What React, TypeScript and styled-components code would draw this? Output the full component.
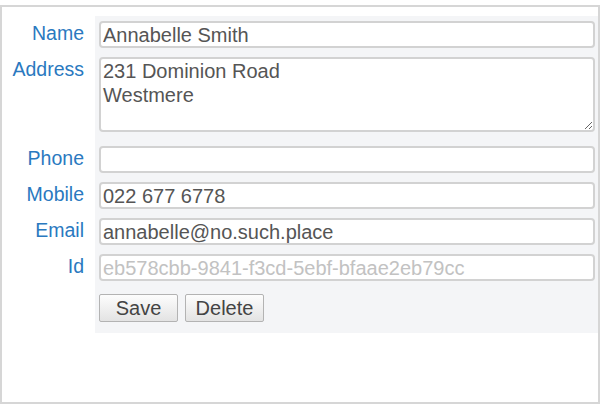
import styled, { createGlobalStyle } from "styled-components";

const GlobalStyle = createGlobalStyle`
  body {
    margin: 0;
    background: #fff;
    font-family: "Liberation Sans", Arial, sans-serif;
  }
`

type Field = {
    label: string
    value: string
    multiline?: boolean
    disabled?: boolean
}

const fields: Field[] = [
    {label: "Name", value: "Annabelle Smith"},
    {label: "Address", value: "231 Dominion Road\nWestmere", multiline: true},
    {label: "Phone", value: ""},
    {label: "Mobile", value: "022 677 6778"},
    {label: "Email", value: "annabelle@no.such.place"},
    {label: "Id", value: "eb578cbb-9841-f3cd-5ebf-bfaae2eb79cc", disabled: true},
]

export default function App() {
    return (
        <>
            <GlobalStyle/>
            <Frame>
                {fields.map((field) => (
                    <Row key={field.label}>
                        <Label>{field.label}</Label>
                        <Cell $tall={field.multiline}>
                            {field.multiline
                                ? <TextArea defaultValue={field.value}/>
                                : <TextInput defaultValue={field.value} disabled={field.disabled}/>}
                        </Cell>
                    </Row>
                ))}
                <Row>
                    <Label/>
                    <ButtonCell>
                        <Button>Save</Button>
                        <Button>Delete</Button>
                    </ButtonCell>
                </Row>
            </Frame>
        </>
    )
}

const Frame = styled.div`
  box-sizing: border-box;
  margin-top: 5px;
  width: 600px;
  height: 399px;
  border: 2px solid #d6d6d6;
  padding-top: 9px;
  display: flex;
  flex-direction: column;
`

const Row = styled.div`
  display: flex;
  align-items: stretch;
`

const Label = styled.div`
  box-sizing: border-box;
  width: 93px;
  flex-shrink: 0;
  padding: 6px 11px 0 0;
  text-align: right;
  font-size: 19.5px;
  line-height: 22px;
  color: #2a79bf;
`

const Cell = styled.div<{ $tall?: boolean }>`
  flex: 1;
  background: #f4f5f7;
  padding: 5px 3px ${(p) => (p.$tall ? "9px" : "4px")} 4px;
`

const ButtonCell = styled.div`
  flex: 1;
  display: flex;
  gap: 7px;
  background: #f4f5f7;
  padding: 9px 3px 11px 4px;
`

const TextInput = styled.input`
  display: block;
  box-sizing: border-box;
  width: 100%;
  height: 27px;
  margin: 0;
  padding: 1px 2px 0;
  border: 2px solid #d2d2d2;
  border-radius: 4px;
  background: #fff;
  font-family: "Liberation Sans", Arial, sans-serif;
  font-size: 20px;
  color: #555;
  outline: none;

  &:disabled {
    color: #c2c2c2;
    background: #fff;
  }
`

const TextArea = styled.textarea`
  display: block;
  box-sizing: border-box;
  width: 100%;
  height: 75px;
  margin: 0;
  padding: 0 2px;
  border: 2px solid #d2d2d2;
  border-radius: 4px;
  background: #fff;
  font-family: "Liberation Sans", Arial, sans-serif;
  font-size: 20px;
  line-height: 24px;
  color: #555;
  outline: none;
`

const Button = styled.button`
  box-sizing: border-box;
  width: 79px;
  height: 28px;
  margin: 0;
  padding: 0;
  border: 1px solid #b3b3b3;
  border-radius: 2px;
  background: linear-gradient(to bottom, #fdfdfd, #e3e3e3);
  font-family: "Liberation Sans", Arial, sans-serif;
  font-size: 20px;
  color: #444;
`
